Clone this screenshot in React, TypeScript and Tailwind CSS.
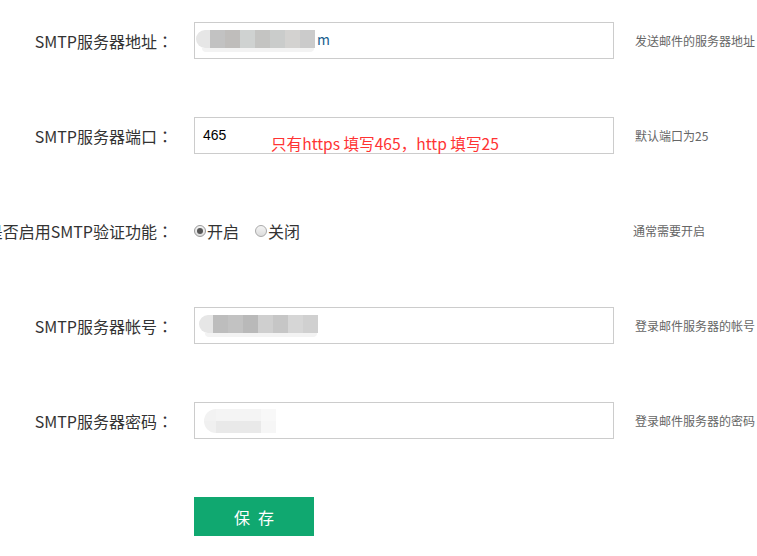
import React from 'react';

const font = { fontFamily: '"Microsoft YaHei", "Noto Sans CJK SC", "Noto Sans", sans-serif' };
const centeredPunct = { fontFamily: '"Noto Sans CJK TC", "Noto Sans CJK SC", sans-serif' };

function Label({ text }: { text: string }) {
  return (
    <div className="w-[173px] shrink-0 flex justify-end whitespace-nowrap text-[16px] text-[#333]">
      <span>{text}</span>
      <span className="w-[16px] text-center" style={centeredPunct}>：</span>
    </div>
  );
}

function Note({ children, className = '' }: { children: React.ReactNode; className?: string }) {
  return <div className={`whitespace-nowrap text-[12px] text-[#666] ${className}`}>{children}</div>;
}

// pixelated blur blocks that hide the real value
function Mosaic({ tones, lead = '#e6e6e6' }: { tones: string[]; lead?: string }) {
  return (
    <div className="flex flex-col">
      <div className="flex items-center h-[18px]">
        <div className="w-[14px] h-[18px] rounded-l-full" style={{ background: lead }} />
        {tones.map((c, i) => (
          <div key={i} className="w-[15px] h-[18px]" style={{ background: c }} />
        ))}
      </div>
      <div className="ml-[6px] w-[112px] h-[4px] rounded-b-full bg-[#f3f3f3]" />
    </div>
  );
}

export default function App() {
  return (
    <div className="w-[757px] h-[556px] bg-white overflow-hidden pt-[22px]" style={font}>
      <div className="flex flex-col gap-[58px]">
        {/* address */}
        <div className="flex items-center h-[37px]">
          <Label text="SMTP服务器地址" />
          <div className="ml-[21px] w-[420px] h-[37px] border border-[#cccccc] flex items-center pl-[1px]">
            <Mosaic tones={['#c2c2c2', '#bfbdbb', '#cfd2d1', '#c4c4c2', '#cacccb', '#d3d2d0', '#cbcbcb']} />
            <span className="text-[14px] text-[#1a5f8f] ml-[2px] -mt-[3px]">m</span>
          </div>
          <Note className="ml-[21px]">发送邮件的服务器地址</Note>
        </div>

        {/* port */}
        <div className="flex items-center h-[37px]">
          <Label text="SMTP服务器端口" />
          <div className="relative ml-[21px] w-[420px] h-[37px] border border-[#cccccc] flex items-center pl-[8px]">
            <span className="text-[14px] text-black" style={{ fontFamily: '"Liberation Sans", Arial, sans-serif' }}>465</span>
            <span className="absolute left-[76px] top-[15px] text-[15.6px] leading-[20px] text-[#ff3333] whitespace-nowrap">
              只有https 填写465，http 填写25
            </span>
          </div>
          <Note className="ml-[21px]">默认端口为25</Note>
        </div>

        {/* auth */}
        <div className="flex items-center h-[37px]">
          <Label text="是否启用SMTP验证功能" />
          <div className="ml-[21px] w-[420px] flex items-center text-[16px] text-[#333]">
            <label className="flex items-center">
              <span className="w-[12px] h-[12px] rounded-full border border-[#999] bg-gradient-to-b from-[#f4f4f4] to-[#dcdcdc] flex items-center justify-center">
                <span className="w-[6px] h-[6px] rounded-full bg-[#555]" />
              </span>
              <span className="ml-[1px]">开启</span>
            </label>
            <label className="flex items-center ml-[16px]">
              <span className="w-[12px] h-[12px] rounded-full border border-[#aaa] bg-gradient-to-b from-[#f4f4f4] to-[#dcdcdc]" />
              <span className="ml-[1px]">关闭</span>
            </label>
          </div>
          <Note className="ml-[19px]">通常需要开启</Note>
        </div>

        {/* account */}
        <div className="flex items-center h-[37px]">
          <Label text="SMTP服务器帐号" />
          <div className="ml-[21px] w-[420px] h-[37px] border border-[#cccccc] flex items-center pl-[4px]">
            <Mosaic tones={['#bdbdbd', '#c2c2c2', '#b9b9b9', '#cfcfcf', '#c6c6c6', '#d6d6d6', '#d0d0d0']} />
          </div>
          <Note className="ml-[21px]">登录邮件服务器的帐号</Note>
        </div>

        {/* password */}
        <div className="flex items-center h-[37px]">
          <Label text="SMTP服务器密码" />
          <div className="ml-[21px] w-[420px] h-[37px] border border-[#cccccc] flex items-center pl-[9px]">
            <div className="flex flex-col">
              <div className="flex h-[12px]">
                <div className="w-[12px] rounded-tl-full bg-[#f2f2f2]" />
                <div className="w-[45px] bg-[#f4f4f4]" />
                <div className="w-[15px] bg-[#f8f8f8]" />
              </div>
              <div className="flex h-[12px]">
                <div className="w-[12px] rounded-bl-full bg-[#f0f0f0]" />
                <div className="w-[45px] bg-[#e9e9e9]" />
                <div className="w-[15px] bg-[#f6f6f6]" />
              </div>
            </div>
          </div>
          <Note className="ml-[21px]">登录邮件服务器的密码</Note>
        </div>

        {/* save */}
        <div className="flex">
          <div className="w-[194px] shrink-0" />
          <button className="w-[120px] h-[39px] bg-[#10a870] text-white text-[16px] tracking-[8px] pl-[8px]">
            保存
          </button>
        </div>
      </div>
    </div>
  );
}
